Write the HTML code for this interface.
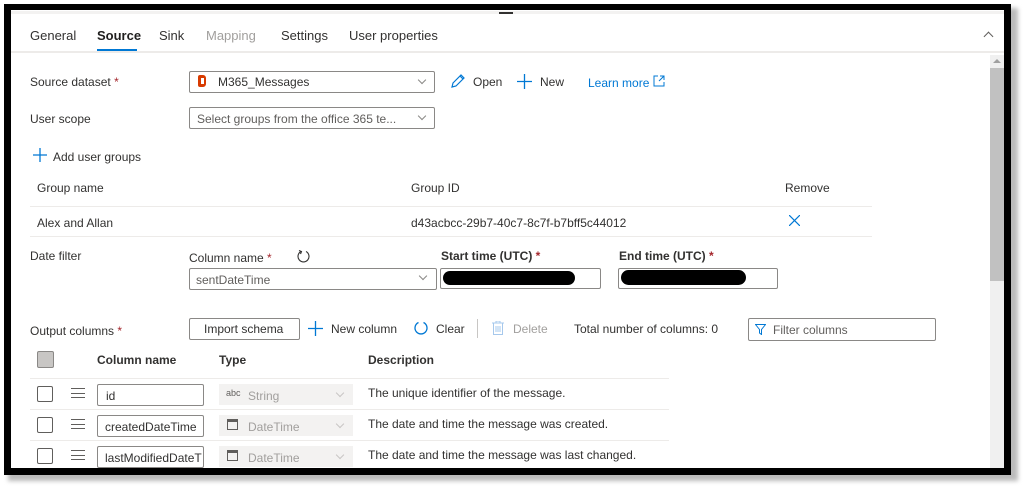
<!DOCTYPE html>
<html><head><meta charset="utf-8"><style>
*{margin:0;padding:0;box-sizing:border-box}
body{width:1024px;height:489px;background:#fff;position:relative;overflow:hidden;font-family:"Liberation Sans",sans-serif;font-size:12px;color:#323130}
.a{position:absolute;white-space:nowrap}
.box{position:absolute;border:1px solid #8a8886;background:#fff;border-radius:2px}
.red{color:#a4262c}
.blue{color:#0078d4}
.chev{position:absolute;width:6px;height:6px;border-right:1px solid #8a8886;border-bottom:1px solid #8a8886;transform:rotate(45deg)}
.hl{position:absolute;height:1px;background:#edebe9}
.cb{position:absolute;width:16px;height:16px;border:1px solid #605e5c;border-radius:2px;background:#fff}
.ham{position:absolute;width:14px;height:10px;border-top:1px solid #605e5c;border-bottom:1px solid #605e5c}
.ham:after{content:"";position:absolute;left:0;right:0;top:4px;height:1px;background:#605e5c}
.red-blob{position:absolute;background:#000;border-radius:8px}
</style></head><body>
<!-- shadow & frame -->
<div class="a" style="left:8px;top:8px;width:1010px;height:473px;background:#bbb;filter:blur(2px)"></div>
<div class="a" style="left:4px;top:4px;width:1007px;height:471px;background:#000"></div>
<div class="a" style="left:11px;top:10px;width:993px;height:458px;background:#fff;overflow:hidden">
</div>
<div class="a" style="left:11px;top:11px;width:993px;height:3px;background:#f3f2f1"></div>
<div class="a" style="left:499px;top:12px;width:14px;height:2px;background:#323130"></div>

<!-- tabs -->
<div class="a" style="left:30px;top:28px;font-size:13px">General</div>
<div class="a" style="left:97px;top:28px;font-size:13px;font-weight:bold;color:#201f1e">Source</div>
<div class="a" style="left:97px;top:49px;width:40px;height:2px;background:#0078d4"></div>
<div class="a" style="left:159px;top:28px;font-size:13px">Sink</div>
<div class="a" style="left:206px;top:28px;font-size:13px;color:#a19f9d">Mapping</div>
<div class="a" style="left:281px;top:28px;font-size:13px">Settings</div>
<div class="a" style="left:349px;top:28px;font-size:13px">User properties</div>
<div class="a" style="left:985px;top:33px;width:7px;height:7px;border-left:1px solid #605e5c;border-top:1px solid #605e5c;transform:rotate(45deg)"></div>
<div class="a" style="left:11px;top:51px;width:993px;height:2px;background:#edebe9"></div>

<!-- scrollbar -->
<div class="a" style="left:990px;top:55px;width:14px;height:413px;background:#f0f0f0"></div>
<div class="a" style="left:993px;top:59px;width:0;height:0;border-left:4px solid transparent;border-right:4px solid transparent;border-bottom:4px solid #a0a0a0"></div>
<div class="a" style="left:990px;top:68px;width:14px;height:213px;background:#c1c1c1"></div>

<!-- source dataset -->
<div class="a" style="left:30px;top:75px">Source dataset <span class="red">*</span></div>
<div class="box" style="left:189px;top:71px;width:246px;height:22px"></div>
<div class="a" style="left:198px;top:75px;width:8px;height:12px;background:#d83b01;border-radius:2px 3px 3px 2px"></div>
<div class="a" style="left:201px;top:78px;width:3px;height:6px;background:#fff"></div>
<div class="a" style="left:218px;top:75px;color:#323130">M365_Messages</div>
<div class="chev" style="left:419px;top:77px"></div>
<svg class="a" style="left:450px;top:73px" width="16" height="16" viewBox="0 0 16 16"><path d="M2 14l1-4 8-8 3 3-8 8z M10 3l3 3" fill="none" stroke="#0078d4" stroke-width="1.2"/></svg>
<div class="a" style="left:473px;top:75px">Open</div>
<svg class="a" style="left:517px;top:74px" width="15" height="15"><path d="M7.5 0v15M0 7.5h15" stroke="#0078d4" stroke-width="1.3"/></svg>
<div class="a" style="left:540px;top:75px">New</div>
<div class="a blue" style="left:588px;top:76px">Learn more</div>
<svg class="a" style="left:653px;top:75px" width="12" height="12"><path d="M5 1H1v10h10V7M7 1h4v4M11 1L6 6" fill="none" stroke="#0078d4" stroke-width="1"/></svg>

<!-- user scope -->
<div class="a" style="left:30px;top:112px">User scope</div>
<div class="box" style="left:189px;top:107px;width:246px;height:22px"></div>
<div class="a" style="left:197px;top:112px;color:#605e5c">Select groups from the office 365 te...</div>
<div class="chev" style="left:419px;top:113px"></div>

<svg class="a" style="left:33px;top:148px" width="14" height="14"><path d="M7 0v14M0 7h14" stroke="#0078d4" stroke-width="1.3"/></svg>
<div class="a" style="left:53px;top:150px">Add user groups</div>

<div class="a" style="left:37px;top:181px">Group name</div>
<div class="a" style="left:411px;top:181px">Group ID</div>
<div class="a" style="left:785px;top:181px">Remove</div>
<div class="hl" style="left:30px;top:206px;width:842px"></div>
<div class="a" style="left:37px;top:216px">Alex and Allan</div>
<div class="a" style="left:411px;top:216px">d43acbcc-29b7-40c7-8c7f-b7bff5c44012</div>
<svg class="a" style="left:789px;top:215px" width="11" height="11"><path d="M0 0L11 11M11 0L0 11" stroke="#0078d4" stroke-width="1.2"/></svg>
<div class="hl" style="left:30px;top:236px;width:842px"></div>

<!-- date filter -->
<div class="a" style="left:30px;top:249px">Date filter</div>
<div class="a" style="left:189px;top:251px">Column name <span class="red">*</span></div>
<svg class="a" style="left:296px;top:249px" width="15" height="15" viewBox="0 0 15 15"><path d="M5 2.5A5.5 5.5 0 1 0 10 2.5" fill="none" stroke="#323130" stroke-width="1.1"/><path d="M3 1.5l2.5 1-1 2.5" fill="none" stroke="#323130" stroke-width="1.1"/></svg>
<div class="box" style="left:189px;top:268px;width:248px;height:22px"></div>
<div class="a" style="left:196px;top:273px;color:#605e5c">sentDateTime</div>
<div class="chev" style="left:420px;top:273px"></div>
<div class="a" style="left:441px;top:249px;font-weight:bold">Start time (UTC) <span class="red">*</span></div>
<div class="box" style="left:440px;top:268px;width:161px;height:21px"></div>
<div class="red-blob" style="left:443px;top:271px;width:132px;height:14px"></div>
<div class="a" style="left:619px;top:249px;font-weight:bold">End time (UTC) <span class="red">*</span></div>
<div class="box" style="left:618px;top:268px;width:160px;height:21px"></div>
<div class="red-blob" style="left:621px;top:270px;width:125px;height:15px"></div>

<!-- output columns -->
<div class="a" style="left:30px;top:324px">Output columns <span class="red">*</span></div>
<div class="box" style="left:189px;top:318px;width:111px;height:22px"></div>
<div class="a" style="left:204px;top:322px">Import schema</div>
<svg class="a" style="left:308px;top:321px" width="15" height="15"><path d="M7.5 0v15M0 7.5h15" stroke="#0078d4" stroke-width="1.3"/></svg>
<div class="a" style="left:331px;top:322px">New column</div>
<svg class="a" style="left:413px;top:320px" width="16" height="16" viewBox="0 0 16 16"><path d="M5.5 2.5A6 6 0 1 0 10.5 2.5" fill="none" stroke="#0078d4" stroke-width="1.3"/></svg>
<div class="a" style="left:436px;top:322px">Clear</div>
<div class="a" style="left:477px;top:319px;width:1px;height:19px;background:#c8c6c4"></div>
<svg class="a" style="left:492px;top:321px" width="12" height="14"><path d="M0 2h12M4 2V0h4v2M1.5 2v11.5h9V2M4 5v6M6 5v6M8 5v6" fill="none" stroke="#a6c8ec" stroke-width="1"/></svg>
<div class="a" style="left:513px;top:322px;color:#a19f9d">Delete</div>
<div class="a" style="left:574px;top:322px">Total number of columns: 0</div>
<div class="box" style="left:748px;top:318px;width:188px;height:23px"></div>
<svg class="a" style="left:755px;top:324px" width="11" height="11"><path d="M0.5 0.5h10L6.5 5.5v5l-2-1.5v-3.5z" fill="none" stroke="#0078d4" stroke-width="1"/></svg>
<div class="a" style="left:773px;top:323px;color:#605e5c">Filter columns</div>

<div class="a" style="left:37px;top:351px;width:17px;height:17px;border:1px solid #8a8886;background:#c8c6c4;border-radius:2px"></div>
<div class="a" style="left:97px;top:353px;font-weight:bold;color:#323130">Column name</div>
<div class="a" style="left:219px;top:353px;font-weight:bold">Type</div>
<div class="a" style="left:368px;top:353px;font-weight:bold">Description</div>
<div class="hl" style="left:30px;top:378px;width:639px"></div>
<div class="hl" style="left:30px;top:409px;width:639px"></div>
<div class="hl" style="left:30px;top:440px;width:639px"></div>

<!-- rows -->
<div class="cb" style="left:37px;top:386px"></div>
<div class="ham" style="left:71px;top:388px"></div>
<div class="box" style="left:97px;top:384px;width:107px;height:22px"></div>
<div class="a" style="left:106px;top:389px">id</div>
<div class="a" style="left:219px;top:384px;width:134px;height:21px;background:#f3f2f1"></div>
<div class="a" style="left:226px;top:388px;font-size:9px;color:#605e5c">abc</div>
<div class="a" style="left:248px;top:389px;color:#a19f9d">String</div>
<div class="chev" style="left:337px;top:390px;border-color:#c8c6c4"></div>
<div class="a" style="left:368px;top:386px">The unique identifier of the message.</div>

<div class="cb" style="left:37px;top:417px"></div>
<div class="ham" style="left:71px;top:419px"></div>
<div class="box" style="left:97px;top:415px;width:107px;height:22px"></div>
<div class="a" style="left:105px;top:420px;width:97px;overflow:hidden">createdDateTime</div>
<div class="a" style="left:219px;top:415px;width:134px;height:21px;background:#f3f2f1"></div>
<div class="a" style="left:227px;top:419px;width:11px;height:11px;border:1.5px solid #605e5c;border-top-width:3px"></div>
<div class="a" style="left:248px;top:420px;color:#a19f9d">DateTime</div>
<div class="chev" style="left:337px;top:421px;border-color:#c8c6c4"></div>
<div class="a" style="left:368px;top:417px">The date and time the message was created.</div>

<div class="cb" style="left:37px;top:448px"></div>
<div class="ham" style="left:71px;top:450px"></div>
<div class="box" style="left:97px;top:446px;width:107px;height:22px"></div>
<div class="a" style="left:105px;top:451px;width:97px;overflow:hidden">lastModifiedDateTime</div>
<div class="a" style="left:219px;top:446px;width:134px;height:21px;background:#f3f2f1"></div>
<div class="a" style="left:227px;top:450px;width:11px;height:11px;border:1.5px solid #605e5c;border-top-width:3px"></div>
<div class="a" style="left:248px;top:451px;color:#a19f9d">DateTime</div>
<div class="chev" style="left:337px;top:452px;border-color:#c8c6c4"></div>
<div class="a" style="left:368px;top:448px">The date and time the message was last changed.</div>

<!-- bottom border re-cover -->
<div class="a" style="left:4px;top:468px;width:1007px;height:7px;background:#000"></div>
</body></html>
